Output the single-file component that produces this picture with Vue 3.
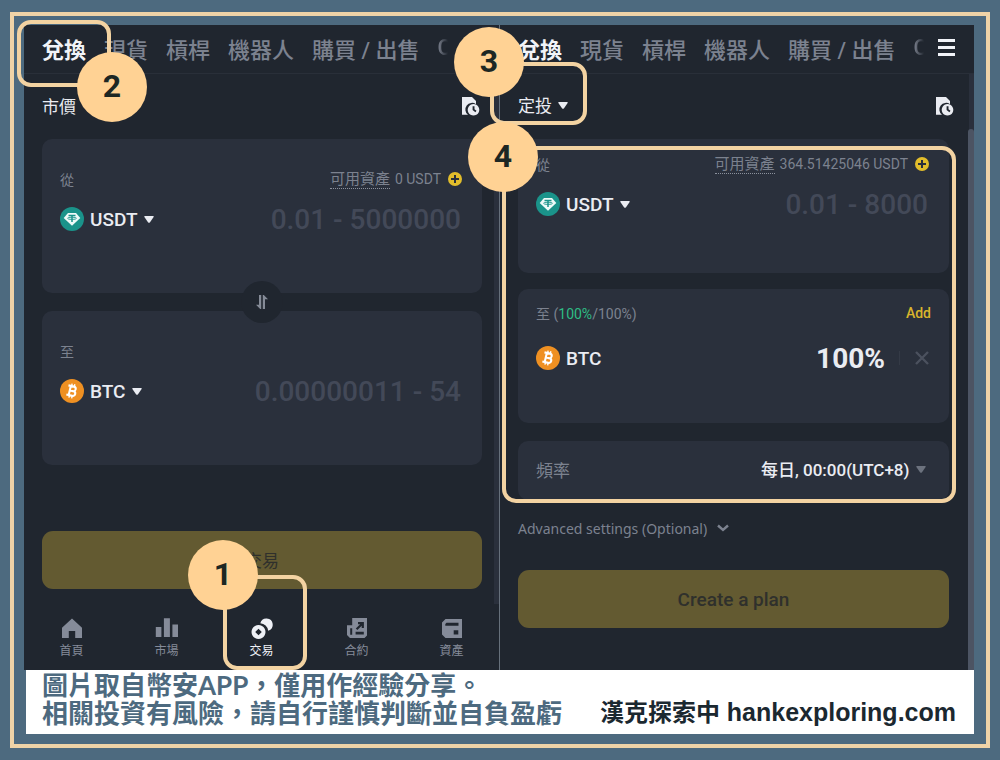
<script setup>
import { ref } from 'vue';

const tabs = ['兌換', '現貨', '槓桿', '機器人', '購買 / 出售'];

const navItems = [
  { icon: 'home', label: '首頁' },
  { icon: 'market', label: '市場' },
  { icon: 'trade', label: '交易', active: true },
  { icon: 'futures', label: '合約' },
  { icon: 'wallet', label: '資產' },
];

const fromAmount = ref('');
const toAmount = ref('');
const planAmount = ref('');
const share = ref('100%');
</script>

<template>
  <svg class="sprite" aria-hidden="true">
    <symbol id="caret" viewBox="0 0 10 7">
      <path d="M1 0h8q1.300 0 .6 1.100L6 6.200q-1 1.200-2 0L.4 1.100Q-.3 0 1 0z" fill="currentColor" />
    </symbol>
    <symbol id="record" viewBox="0 0 18 20">
      <path d="M0 1h10l4 4v3.200A6.600 6.600 0 0 0 6 18.800H0z" fill="currentColor" />
      <path d="M11.500 8a5.800 5.800 0 1 0 .01 0zM10.600 10.300h1.900v3l2 1.500-1.100 1.400-2.800-2.100z" fill="currentColor" fill-rule="evenodd" />
    </symbol>
    <symbol id="plus" viewBox="0 0 14 14">
      <circle cx="7" cy="7" r="7" fill="#e2bd2b" />
      <path d="M7 3v8M3 7h8" stroke="#2a303c" stroke-width="2" />
    </symbol>
    <symbol id="usdt" viewBox="0 0 24 24">
      <circle cx="12" cy="12" r="12" fill="#1a938a" />
      <path d="M8 6h8L20.300 11 12 18.800 3.700 11z" fill="#eefaf8" />
      <path d="M8.500 8.500h7M12 8.500v6.500" stroke="#1a938a" stroke-width="1.500" fill="none" />
      <ellipse cx="12" cy="11.300" rx="4.400" ry="1.100" fill="none" stroke="#1a938a" stroke-width=".9" />
    </symbol>
    <symbol id="btc" viewBox="0 0 24 24">
      <circle cx="12" cy="12" r="12" fill="#ef9022" />
      <g transform="rotate(13 12 12)" fill="none" stroke="#fff" stroke-width="2.100">
        <path d="M7.300 7.300h5.600a2.300 2.300 0 0 1 0 4.600H9.500M9.700 7.300v9.400M7.300 16.700h6.100a2.400 2.400 0 0 0 0-4.800H9.500" />
        <path d="M10.500 4.800v2.500M13.300 4.800v2.500M10.500 16.700v2.500M13.300 16.700v2.500" stroke-width="1.400" />
      </g>
    </symbol>
    <symbol id="swap" viewBox="0 0 12 14">
      <path d="M3 0h2.200v14h-1L0 9.800h3zM6.800 0h1L12 4.200H9V14H6.800z" fill="currentColor" />
    </symbol>
    <symbol id="home" viewBox="0 0 24 24">
      <path d="M12 2.500 22 11.800V22h-6.800v-7H8.800v7H2V11.800z" fill="currentColor" />
    </symbol>
    <symbol id="market" viewBox="0 0 24 24">
      <path d="M.8 11h5.600v10H.8zM8.900 2.300h6V21h-6zM17.400 8.600H23V21h-5.600z" fill="currentColor" />
    </symbol>
    <symbol id="trade" viewBox="0 0 24 24">
      <path d="M10.300 7.300a6.300 6.300 0 1 1 7.900 7.500 8.400 8.400 0 0 0-7.900-7.500z" fill="currentColor" />
      <path d="M8.500 9a7 7 0 1 0 .01 0zM8.500 12.700l3.300 3.300-3.300 3.300L5.200 16z" fill="currentColor" fill-rule="evenodd" />
    </symbol>
    <symbol id="futures" viewBox="0 0 24 24">
      <path d="M7.200 2H22v17.500l-2.500 2.500H5L2 19V9.200h5.200zM5.200 12.200v6.600h2v-6.600zM10.600 15.800v2.600h8.200v-2.600zM13 6v2.200h2.100l-4.300 4.200 1.600 1.600 4.300-4.200v2.100h2.200V6z" fill="currentColor" fill-rule="evenodd" />
    </symbol>
    <symbol id="wallet" viewBox="0 0 24 24">
      <path d="M5.500 3H22v19H5.500L2 18.500V6.500zM6.500 6.700 5.300 8v1.700h13.200v-3zM13.700 14.200v4.200h4.600v-4.200z" fill="currentColor" fill-rule="evenodd" />
    </symbol>
  </svg>

  <div class="poster">
    <div class="frame">
      <main class="phones">
        <section class="phone">
          <nav class="tabs">
            <button v-for="(tab, i) in tabs" :key="tab" class="tab" :class="{ active: i === 0 }">{{ tab }}</button>
            <span class="tab-cut">C</span>
          </nav>
          <div class="subbar">
            <span>市價</span>
            <button class="icon-button" aria-label="訂單記錄"><svg class="record"><use href="#record" /></svg></button>
          </div>
          <div class="body">
            <div class="card tall">
              <div class="card-top">
                <label for="from-amount">從</label>
                <span class="balance"><span class="dotted">可用資產</span>0 USDT<svg class="plus"><use href="#plus" /></svg></span>
              </div>
              <div class="card-row">
                <svg class="coin"><use href="#usdt" /></svg>
                <select class="token" aria-label="從幣種"><option>USDT</option></select>
                <svg class="caret"><use href="#caret" /></svg>
                <input id="from-amount" v-model="fromAmount" class="amount" placeholder="0.01 - 5000000" />
              </div>
              <button class="swap" aria-label="交換"><svg><use href="#swap" /></svg></button>
            </div>
            <div class="card tall">
              <div class="card-top"><label for="to-amount">至</label></div>
              <div class="card-row">
                <svg class="coin"><use href="#btc" /></svg>
                <select class="token" aria-label="至幣種"><option>BTC</option></select>
                <svg class="caret"><use href="#caret" /></svg>
                <input id="to-amount" v-model="toAmount" class="amount" placeholder="0.00000011 - 54" />
              </div>
            </div>
            <button class="submit trade-submit">交易</button>
          </div>
          <ul class="nav">
            <li v-for="item in navItems" :key="item.label">
              <a href="#" class="nav-link" :class="{ active: item.active }">
                <svg><use :href="'#' + item.icon" /></svg>
                {{ item.label }}
              </a>
              <template v-if="item.active">
                <span class="ring ring-one"></span>
                <span class="badge badge-one">1</span>
              </template>
            </li>
          </ul>
          <span class="track track-left"></span>
          <span class="ring ring-two"></span>
          <span class="badge badge-two">2</span>
        </section>

        <section class="phone phone-right">
          <nav class="tabs">
            <button v-for="(tab, i) in tabs" :key="tab" class="tab" :class="{ active: i === 0 }">{{ tab }}</button>
            <span class="tab-cut">C</span>
            <button class="icon-button menu" aria-label="選單">
              <svg viewBox="0 0 17 17"><path d="M0 1.500h17M0 8.500h17M0 15.500h17" stroke="currentColor" stroke-width="3" /></svg>
            </button>
          </nav>
          <div class="subbar">
            <span class="mode">
              <select aria-label="模式"><option>定投</option></select>
              <svg class="caret"><use href="#caret" /></svg>
            </span>
            <button class="icon-button" aria-label="訂單記錄"><svg class="record"><use href="#record" /></svg></button>
          </div>
          <div class="body">
            <div class="card short from-card">
              <div class="card-top">
                <label for="plan-amount">從</label>
                <span class="balance"><span class="dotted">可用資產</span>364.51425046 USDT<svg class="plus"><use href="#plus" /></svg></span>
              </div>
              <div class="card-row">
                <svg class="coin"><use href="#usdt" /></svg>
                <select class="token" aria-label="扣款幣種"><option>USDT</option></select>
                <svg class="caret"><use href="#caret" /></svg>
                <input id="plan-amount" v-model="planAmount" class="amount" placeholder="0.01 - 8000" />
              </div>
            </div>
            <div class="card short to-card">
              <div class="card-top">
                <label for="share">至 (<span class="green">100%</span>/100%)</label>
                <button class="add">Add</button>
              </div>
              <div class="card-row">
                <svg class="coin"><use href="#btc" /></svg>
                <span class="token">BTC</span>
                <input id="share" v-model="share" class="amount" />
                <button class="icon-button remove" aria-label="移除">
                  <svg viewBox="0 0 14 14"><path d="M1 1l12 12M13 1L1 13" stroke="currentColor" stroke-width="2.400" /></svg>
                </button>
              </div>
            </div>
            <div class="card frequency">
              <label for="frequency">頻率</label>
              <span class="mode">
                <select id="frequency"><option>每日, 00:00(UTC+8)</option></select>
                <svg class="caret"><use href="#caret" /></svg>
              </span>
            </div>
            <button class="advanced">
              Advanced settings (Optional)
              <svg viewBox="0 0 12 8"><path d="M1 1.500l5 4.500 5-4.500" fill="none" stroke="currentColor" stroke-width="2.400" /></svg>
            </button>
            <button class="submit">Create a plan</button>
          </div>
          <span class="track"></span>
          <span class="thumb"></span>
          <span class="ring ring-three"></span>
          <span class="ring ring-four"></span>
          <span class="badge badge-three">3</span>
          <span class="badge badge-four">4</span>
        </section>
      </main>

      <footer class="footer">
        <div class="notice">
          <p>圖片取自幣安APP，僅用作經驗分享。</p>
          <p>相關投資有風險，請自行謹慎判斷並自負盈虧</p>
        </div>
        <p class="credit">漢克探索中 <span class="site">hankexploring.com</span></p>
      </footer>
    </div>
  </div>
</template>

<style>
body {
  margin: 0;
  background: #4d6a7f;
}
</style>

<style scoped>
.sprite {
  position: absolute;
  width: 0;
  height: 0;
}

.poster {
  box-sizing: border-box;
  min-height: 100vh;
  padding: 12px 10px;
  background: #4d6a7f;
  font-family: Roboto, 'Noto Sans CJK TC', sans-serif;
  display: flex;
}

.poster * {
  box-sizing: border-box;
}

.frame {
  flex: 1;
  min-width: 0;
  border: 4px solid #efd3a7;
  padding: 9px 12px 10px 10px;
  display: flex;
  flex-direction: column;
}

button,
select,
input {
  padding: 0;
  border: none;
  background: none;
  color: inherit;
  font: inherit;
  appearance: none;
  outline: none;
}

svg {
  display: block;
  flex: none;
}

.phones {
  flex: 1;
  display: grid;
  grid-template-columns: 1fr 1fr;
}

.phone {
  position: relative;
  min-width: 0;
  background: #20262f;
  color: #eaecf2;
  display: flex;
  flex-direction: column;
}

.phone-right {
  border-left: 1px solid #66707b;
}

.tabs {
  height: 49px;
  padding: 0 0 3px 18px;
  border-bottom: 1px solid #292f39;
  display: flex;
  align-items: center;
  gap: 18px;
  font-size: 22px;
  font-weight: 500;
  color: #7c828f;
  white-space: nowrap;
}

.tab.active {
  color: #f1f3f8;
  font-weight: 700;
}

.tab-cut {
  flex: none;
  width: 10px;
  overflow: hidden;
  mask-image: linear-gradient(to right, #000, transparent);
}

.menu {
  margin-left: auto;
  margin-right: 21px;
  color: #f1f3f8;
}

.phone-right .tabs {
  gap: 18px;
}

.phone-right .menu {
  margin-left: -4px;
}

.menu svg {
  width: 17px;
  height: 17px;
}

.subbar {
  height: 65px;
  padding: 0 19px 2px 18px;
  display: flex;
  align-items: center;
  justify-content: space-between;
  font-size: 17px;
}

.phone-right .subbar {
  padding-right: 20px;
}

.record {
  width: 18px;
  height: 20px;
}

.mode {
  display: flex;
  align-items: center;
  gap: 6px;
}

.caret {
  width: 10px;
  height: 7px;
}

.body {
  flex: 1;
  padding: 0 17px 0 18px;
  display: flex;
  flex-direction: column;
}

.phone-right .body {
  padding-right: 25px;
}

.card {
  position: relative;
  padding: 0 18px;
  border-radius: 10px;
  background: #2a303c;
}

.tall {
  height: 154px;
  padding-top: 28px;
  margin-bottom: 18px;
}

.short {
  height: 134px;
  margin-bottom: 16px;
}

.from-card {
  padding-top: 13px;
}

.to-card {
  padding-top: 12px;
  margin-bottom: 18px;
}

.card-top {
  height: 24px;
  display: flex;
  align-items: center;
  justify-content: space-between;
  font-size: 14px;
  color: #7c828f;
}

.balance {
  margin-right: 2px;
  display: flex;
  align-items: center;
  gap: 5px;
}

.dotted {
  font-size: 15px;
  line-height: 18px;
  border-bottom: 1px dotted #8b919d;
}

.plus {
  width: 14px;
  height: 14px;
  margin-left: 2px;
}

.green {
  color: #2ebd85;
}

.add {
  color: #d9b52c;
  font-weight: 500;
}

.card-row {
  height: 32px;
  margin-top: 12px;
  display: flex;
  align-items: center;
}

.to-card .card-row {
  margin-top: 17px;
}

.coin {
  width: 24px;
  height: 24px;
}

.token {
  margin: 0 6px;
  font-size: 19px;
  font-weight: 500;
}

.amount {
  flex: 1;
  width: 0;
  min-width: 0;
  margin-right: 3px;
  text-align: right;
  font-size: 28px;
  font-weight: 500;
}

.amount::placeholder {
  color: #434958;
  opacity: 1;
}

#share {
  margin-right: 14px;
  font-weight: 700;
}

.remove {
  padding: 0 2px 0 15px;
  border-left: 1px solid #343a46;
  color: #4b515e;
}

.remove svg {
  width: 14px;
  height: 14px;
}

.swap {
  position: absolute;
  z-index: 1;
  left: 50%;
  bottom: -30px;
  width: 42px;
  height: 42px;
  margin-left: -21px;
  border-radius: 50%;
  background: #20262f;
  color: #858b97;
  display: flex;
  align-items: center;
  justify-content: center;
}

.swap svg {
  width: 12px;
  height: 14px;
}

.frequency {
  height: 59px;
  padding-bottom: 2px;
  display: flex;
  align-items: center;
  justify-content: space-between;
  font-size: 17px;
}

.frequency label {
  color: #7c828f;
}

.frequency .mode {
  margin-right: 5px;
  font-weight: 500;
}

.frequency .caret {
  color: #6c727e;
}

.advanced {
  height: 58px;
  margin-bottom: 12px;
  padding-bottom: 2px;
  display: flex;
  align-items: center;
  gap: 10px;
  font-family: 'Noto Sans', sans-serif;
  font-size: 14px;
  color: #7c828f;
}

.advanced svg {
  width: 12px;
  height: 8px;
}

.submit {
  height: 58px;
  border-radius: 11px;
  background: #635a31;
  color: #2f302c;
  font-size: 19px;
  font-weight: 500;
}

.trade-submit {
  margin-top: 48px;
  padding-bottom: 2px;
  font-size: 17px;
  font-weight: 400;
}

.nav {
  height: 81px;
  margin: 0;
  padding: 0;
  list-style: none;
  display: grid;
  grid-template-columns: repeat(5, 1fr);
}

.nav li {
  position: relative;
}

.nav-link {
  padding-top: 27px;
  display: flex;
  flex-direction: column;
  align-items: center;
  gap: 2px;
  font-size: 12px;
  line-height: 18px;
  color: #858b99;
  text-decoration: none;
}

.nav-link.active {
  color: #eef0f6;
}

.nav-link svg {
  width: 24px;
  height: 24px;
}

.track,
.thumb {
  position: absolute;
  right: 0;
  top: 49px;
  bottom: 0;
  width: 5px;
  background: #2a303c;
}

.track-left {
  bottom: 66px;
}

.thumb {
  top: 104px;
  width: 6px;
  border-radius: 3px 3px 0 0;
  background: #4c5463;
}

.ring {
  position: absolute;
  border: 4px solid #f3d3a2;
  border-radius: 14px;
  pointer-events: none;
}

.badge {
  position: absolute;
  width: 70px;
  height: 70px;
  border-radius: 50%;
  background: #ffd294;
  color: #1d2723;
  font-size: 32px;
  font-weight: 700;
  line-height: 68px;
  text-align: center;
}

.ring-one {
  left: 9px;
  right: 2px;
  top: -14px;
  bottom: 0;
}

.badge-one {
  left: -26px;
  top: -49px;
}

.ring-two {
  left: -7px;
  top: -5px;
  width: 94px;
  height: 67px;
}

.badge-two {
  left: 53px;
  top: 27px;
}

.ring-three {
  left: -10px;
  top: 37px;
  width: 97px;
  height: 63px;
}

.badge-three {
  left: -46px;
  top: 2px;
}

.ring-four {
  left: 2px;
  right: 18px;
  top: 121px;
  height: 357px;
}

.badge-four {
  left: -32px;
  top: 97px;
}

.footer {
  min-height: 64px;
  margin-left: 2px;
  padding: 0 18px 7px 16px;
  background: #fff;
  display: flex;
  align-items: flex-end;
  justify-content: space-between;
  line-height: 28px;
  font-weight: 700;
  white-space: nowrap;
}

.footer p {
  margin: 0;
}

.notice {
  font-family: Lato, 'Noto Sans CJK TC', sans-serif;
  font-size: 26px;
  color: #4d6a7f;
}

.credit {
  font-family: 'Liberation Sans', 'Noto Sans CJK TC', sans-serif;
  font-size: 24px;
  color: #1b2830;
}

.site {
  font-size: 25px;
}
</style>
